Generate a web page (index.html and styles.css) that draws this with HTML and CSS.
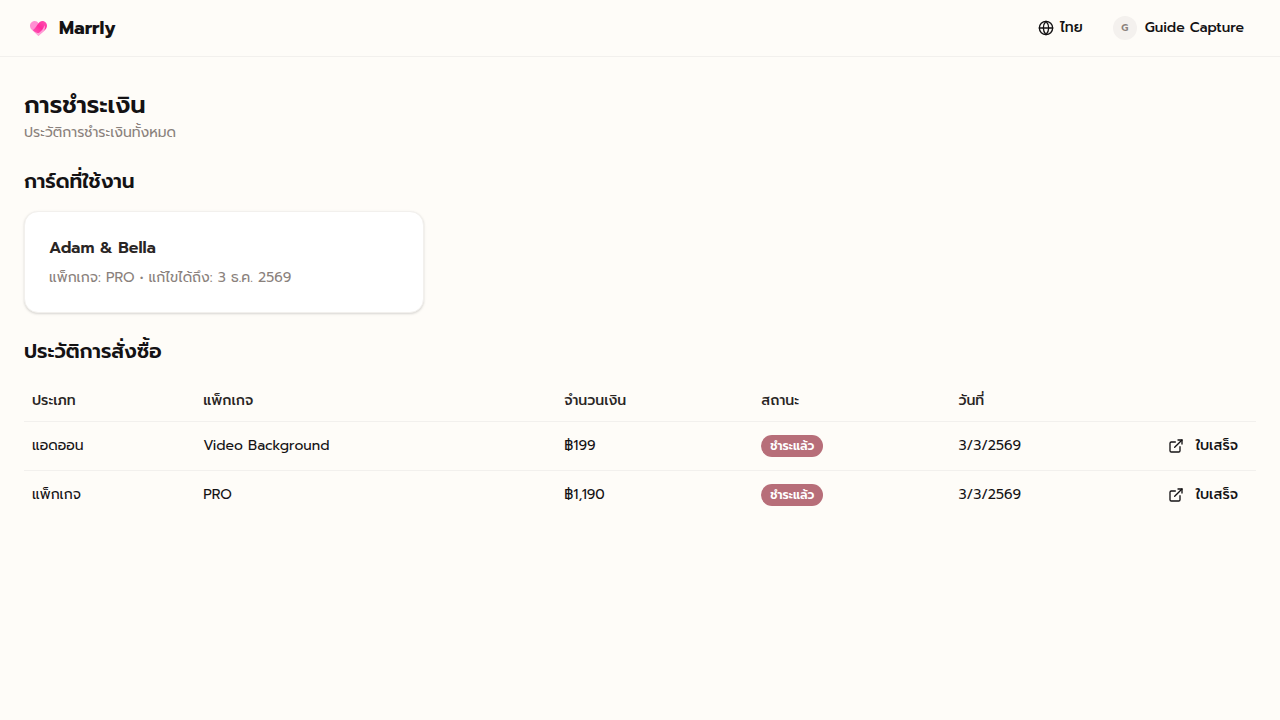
FILE: index.html
```html
<!DOCTYPE html>
<html lang="th">
<head>
  <meta charset="UTF-8">
  <meta name="viewport" content="width=device-width, initial-scale=1">
  <title>การชำระเงิน - Marrly</title>
  <link rel="stylesheet" href="styles.css">
</head>
<body>

  <header class="topbar">
    <a class="brand" href="#">
      <svg class="brand-logo" viewBox="0 0 32 28" aria-hidden="true">
        <defs>
          <clipPath id="heart">
            <path d="M16 28 3 16C-1 12-1 5 3 2 7-1 13-1 16 4c3-5 9-5 13-2 4 3 4 10 0 14z"/>
          </clipPath>
          <linearGradient id="pink" x1="0" y1="1" x2="1" y2="0">
            <stop offset="0" stop-color="#ff5cb8"/>
            <stop offset=".5" stop-color="#ff2a9d"/>
            <stop offset="1" stop-color="#ff55b4"/>
          </linearGradient>
        </defs>
        <g clip-path="url(#heart)">
          <path fill="#ff8fd2" d="M0 0h32v28H0z"/>
          <path fill="url(#pink)" d="M5 17C11 14 13 6 18 2c6-5 14-1 14 6 0 7-5 12-10 14-6 2-12 1-17-5z"/>
          <path fill="#ff9bd6" d="M17 22c5-3 9-8 10-14 3 6 0 12-7 17z"/>
          <path fill="#ffa6d9" d="M6 18c4 4 9 5 14 4l-4 7z"/>
        </g>
      </svg>
      <span>Marrly</span>
    </a>
    <div class="topbar-actions">
      <button class="nav-button language" type="button">
        <svg class="icon" viewBox="0 0 24 24" aria-hidden="true">
          <circle cx="12" cy="12" r="10"/>
          <path d="M12 2a14.500 14.500 0 0 0 0 20 14.500 14.500 0 0 0 0-20"/>
          <path d="M2 12h20"/>
        </svg>
        ไทย
      </button>
      <button class="nav-button account" type="button">
        <span class="avatar">G</span>
        Guide Capture
      </button>
    </div>
  </header>

  <main class="page">
    <div>
      <h1>การชำระเงิน</h1>
      <p class="muted">ประวัติการชำระเงินทั้งหมด</p>
    </div>

    <section>
      <h2>การ์ดที่ใช้งาน</h2>
      <div class="card-grid">
        <article class="card">
          <h3>Adam &amp; Bella</h3>
          <p class="muted">แพ็กเกจ: PRO • แก้ไขได้ถึง: 3 ธ.ค. 2569</p>
        </article>
      </div>
    </section>

    <section>
      <h2>ประวัติการสั่งซื้อ</h2>
      <table class="orders">
        <colgroup>
          <col class="col-type">
          <col class="col-package">
          <col class="col-amount">
          <col class="col-status">
          <col class="col-date">
          <col class="col-receipt">
        </colgroup>
        <thead>
          <tr>
            <th>ประเภท</th>
            <th>แพ็กเกจ</th>
            <th>จำนวนเงิน</th>
            <th>สถานะ</th>
            <th>วันที่</th>
            <th></th>
          </tr>
        </thead>
        <tbody>
          <tr>
            <td>แอดออน</td>
            <td>Video Background</td>
            <td>฿199</td>
            <td><span class="badge">ชำระแล้ว</span></td>
            <td>3/3/2569</td>
            <td>
              <a class="receipt" href="#">
                <svg class="icon" viewBox="0 0 24 24" aria-hidden="true">
                  <path d="M15 3h6v6"/>
                  <path d="M10 14 21 3"/>
                  <path d="M18 13v6a2 2 0 0 1-2 2H5a2 2 0 0 1-2-2V8a2 2 0 0 1 2-2h6"/>
                </svg>
                ใบเสร็จ
              </a>
            </td>
          </tr>
          <tr>
            <td>แพ็กเกจ</td>
            <td>PRO</td>
            <td>฿1,190</td>
            <td><span class="badge">ชำระแล้ว</span></td>
            <td>3/3/2569</td>
            <td>
              <a class="receipt" href="#">
                <svg class="icon" viewBox="0 0 24 24" aria-hidden="true">
                  <path d="M15 3h6v6"/>
                  <path d="M10 14 21 3"/>
                  <path d="M18 13v6a2 2 0 0 1-2 2H5a2 2 0 0 1-2-2V8a2 2 0 0 1 2-2h6"/>
                </svg>
                ใบเสร็จ
              </a>
            </td>
          </tr>
        </tbody>
      </table>
    </section>
  </main>

</body>
</html>
```
FILE: styles.css
```css
* {
  box-sizing: border-box;
}

body {
  margin: 0;
  background: #fefcf8;
  color: #141214;
  font-family: Prompt, "Noto Sans", "Noto Sans Thai", sans-serif;
  font-size: 14px;
  line-height: 20px;
}

h1, h2, h3, p {
  margin: 0;
}

h1 {
  margin-bottom: 2px;
  font-size: 24px;
  line-height: 32px;
  font-weight: 600;
}

h2 {
  margin-bottom: 16px;
  font-size: 20px;
  line-height: 28px;
  font-weight: 600;
}

.muted {
  color: #8a817c;
}

.icon {
  width: 16px;
  height: 16px;
  flex-shrink: 0;
  fill: none;
  stroke: currentColor;
  stroke-width: 2;
  stroke-linecap: round;
  stroke-linejoin: round;
}

/* Top bar */
.topbar {
  display: flex;
  justify-content: space-between;
  align-items: center;
  height: 57px;
  padding: 0 24px;
  border-bottom: 1px solid #f2f0ed;
}

.brand {
  display: flex;
  align-items: center;
  gap: 12px;
  padding-left: 6px;
  color: #141214;
  font-size: 18px;
  line-height: 28px;
  font-weight: 700;
  text-decoration: none;
}

.brand-logo {
  width: 17px;
  height: 15px;
}

.topbar-actions {
  display: flex;
  align-items: center;
  gap: 6px;
}

.nav-button {
  display: flex;
  align-items: center;
  height: 32px;
  padding: 0 12px;
  border: none;
  background: none;
  color: inherit;
  font: inherit;
  font-weight: 500;
  cursor: pointer;
}

.language {
  gap: 6px;
}

.account {
  gap: 8px;
}

.avatar {
  width: 24px;
  height: 24px;
  border-radius: 50%;
  background: #f4f1ee;
  color: #8a817c;
  font-size: 10px;
  line-height: 24px;
  font-weight: 600;
  text-align: center;
}

/* Content */
.page {
  display: flex;
  flex-direction: column;
  gap: 24px;
  padding: 32px 24px;
}

.card-grid {
  display: grid;
  grid-template-columns: repeat(3, 1fr);
  gap: 16px;
}

.card {
  padding: 24px;
  border: 1px solid #f2f0ed;
  border-radius: 14px;
  background: #fff;
  box-shadow: 0 1px 3px rgba(0, 0, 0, 0.1), 0 1px 2px rgba(0, 0, 0, 0.06);
}

.card h3 {
  margin-bottom: 8px;
  color: #292524;
  font-size: 16px;
  line-height: 24px;
  font-weight: 600;
}

/* Orders */
.orders {
  width: 100%;
  table-layout: fixed;
  border-collapse: collapse;
}

.col-type { width: 13.9%; }
.col-package { width: 29.3%; }
.col-amount { width: 16%; }
.col-status { width: 16%; }
.col-date { width: 12.8%; }
.col-receipt { width: 12%; }

.orders th,
.orders td {
  padding: 0 8px;
  text-align: left;
  vertical-align: middle;
}

.orders th {
  height: 40px;
  color: #292524;
  font-weight: 500;
}

.orders td {
  height: 49px;
}

.orders tr {
  border-bottom: 1px solid #f2f0ed;
}

.orders tbody tr:last-child {
  border-bottom: none;
}

.orders td:last-child {
  text-align: right;
}

.badge {
  display: inline-block;
  padding: 2px 9px;
  border-radius: 11px;
  background: #b76e79;
  color: #fff;
  font-size: 12px;
  line-height: 18px;
  font-weight: 600;
  vertical-align: middle;
}

.receipt {
  display: inline-flex;
  align-items: center;
  gap: 12px;
  padding: 0 10px;
  color: inherit;
  font-weight: 500;
  text-decoration: none;
  vertical-align: middle;
}
```
